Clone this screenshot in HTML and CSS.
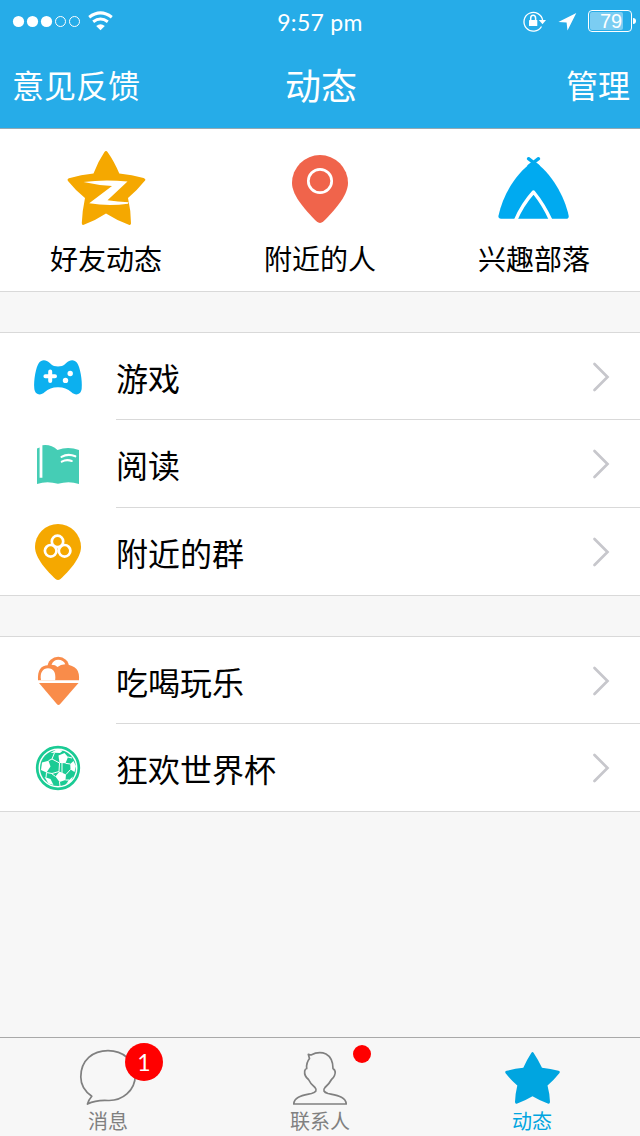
FILE: index.html
```
<!DOCTYPE html>
<html lang="zh-CN">
<head>
<meta charset="utf-8">
<title>动态</title>
<link rel="stylesheet" href="styles.css">
</head>
<body>
<div class="screen">
  <header class="header">
    <div class="status">
      <svg class="signal" viewBox="0 0 120 40">
        <g fill="#fff"><circle cx="18.5" cy="20.5" r="5.6"/><circle cx="32.5" cy="20.5" r="5.6"/><circle cx="46.5" cy="20.5" r="5.6"/></g>
        <g fill="none" stroke="#fff" stroke-width="1"><circle cx="60.5" cy="20.5" r="5"/><circle cx="74.5" cy="20.5" r="5"/></g>
        <g fill="none" stroke="#fff" stroke-width="3"><path d="M89.2 16.2Q100.5 7.6 111.8 16.2"/><path d="M93.2 20.8Q100.5 15.3 107.8 20.8"/></g>
        <path d="M96.2 25Q100.5 21.5 104.8 25L100.5 29.2Z" fill="#fff"/>
      </svg>
      <span class="time">9:57 pm</span>
      <div class="indicators">
        <svg class="lock-location" viewBox="510 0 66 40">
          <path d="M535.5 25.5A9.4 9.4 0 1 1 536.7 19.6" fill="none" stroke="#fff" stroke-width="1.3"/>
          <path d="M532.8 19H540L536.5 23.2Z" fill="#fff"/>
          <rect x="523" y="19" width="8.3" height="6" rx=".6" fill="#fff"/>
          <path d="M524.7 19V17.2A2.4 2.8 0 0 1 529.6 17.2V19" fill="none" stroke="#fff" stroke-width="1.5"/>
          <path d="M570.3 12L561.5 29.6L560.6 21.5L552.4 20.9Z" fill="#fff"/>
        </svg>
        <span class="battery"><span class="battery-level">79</span></span><span class="battery-cap"></span>
      </div>
    </div>
    <nav class="navbar">
      <span class="nav-side">意见反馈</span>
      <span class="nav-title">动态</span>
      <span class="nav-side nav-right">管理</span>
    </nav>
  </header>

  <section class="shortcuts">
    <div class="shortcut">
      <svg class="shortcut-icon" viewBox="61 143 90 90">
        <path d="M104.3 152.2Q106 149.8 107.7 152.2Q114 161 119.3 173.5Q132 174.6 143.6 178Q146.5 179.2 144.6 181Q137 190.5 128 198Q131 211 131 223.5Q130.8 225.5 128.8 224.8Q117 220.5 106 213.5Q95.5 220.5 83.8 224.8Q81.7 225.3 81.8 223Q82.3 210.5 85 198Q75.5 190.5 68 181Q66.8 179 69 178.2Q81 174.4 93.5 173.4Q98 161.5 104.3 152.2Z" fill="#f5a800"/>
        <path d="M83.5 182Q105 179 127.5 181.6L107.5 200.3Q118 202 128.5 202.3L128 203.8Q108 206.5 89.2 203.2L112 186Q98 185.3 83.5 182Z" fill="#fff"/>
      </svg>
      <span class="shortcut-label">好友动态</span>
    </div>
    <div class="shortcut">
      <svg class="shortcut-icon" viewBox="275 143 90 90">
        <path d="M292 183A28 28 0 1 1 348 183C348 196 333 212 323.3 221.5Q320 224.4 316.7 221.5C307 212 292 196 292 183Z" fill="#f0644b"/>
        <circle cx="320" cy="181" r="11.7" fill="none" stroke="#fff" stroke-width="2.7"/>
      </svg>
      <span class="shortcut-label">附近的人</span>
    </div>
    <div class="shortcut">
      <svg class="shortcut-icon" viewBox="489 143 90 90">
        <path d="M528.5 158.7L538 166M538.5 158.7L529 166" fill="none" stroke="#00aaf0" stroke-width="3.4" stroke-linecap="round"/>
        <path d="M533.5 161C551 172 565 197 568.7 216Q568.8 218.8 566 218.8H501Q498.2 218.8 498.4 216C503 195 515 174 533.5 161Z" fill="#00aaf0"/>
        <path d="M515.7 220Q522 205 533.5 192Q544 205 550.7 220" fill="none" stroke="#fff" stroke-width="3.4" stroke-linejoin="round"/>
      </svg>
      <span class="shortcut-label">兴趣部落</span>
    </div>
  </section>

  <section class="list">
    <div class="row">
      <svg class="row-icon" viewBox="28 346 60 60">
        <path d="M39 361.8C41.5 358 46.5 358.5 49.5 361.8Q52 364.5 54 365Q58 365.8 62 365Q64 364.5 66.5 361.8C69.5 358.5 74.5 358 77 361.8C80 366 82.5 379 81.7 387.5C81 394 75.5 395 71.5 391.3Q65.5 386 58 386.2Q50.5 386 44.5 391.3C40.5 395 35 394 34.3 387.5C33.5 379 36 366 39 361.8Z" fill="#0cb0ef"/>
        <path d="M50.2 370.5V380M45.4 375.2H55" stroke="#fff" stroke-width="4" stroke-linecap="round"/>
        <g fill="#fff"><circle cx="70.2" cy="372.5" r="2.7"/><circle cx="65.5" cy="379.4" r="2.7"/></g>
      </svg>
      <span class="row-label">游戏</span>
      <svg class="chevron" viewBox="0 0 20 32"><path d="M4.5 3L17.5 16L4.5 29"/></svg>
    </div>
    <div class="row">
      <svg class="row-icon" viewBox="28 434 60 60">
        <path d="M37 448.5L39.6 447.5V477.7H42.4V445.2Q51 444 57.5 450Q68 446.2 79 450V484Q69 480.5 58 483.8Q47 480.5 37 484Z" fill="#45cdb5"/>
        <path d="M61.5 456.8Q68 453.2 75.3 456.3M61.8 461.7Q66.5 459 71.7 461" fill="none" stroke="#fff" stroke-width="2.1" stroke-linecap="round"/>
      </svg>
      <span class="row-label">阅读</span>
      <svg class="chevron" viewBox="0 0 20 32"><path d="M4.5 3L17.5 16L4.5 29"/></svg>
    </div>
    <div class="row">
      <svg class="row-icon" viewBox="28 522 60 60">
        <path d="M35 547A23 23 0 1 1 81 547C81 558 69 571 60.5 579Q58 581 55.5 579C47 571 35 558 35 547Z" fill="#f5a800"/>
        <g fill="none" stroke="#fff" stroke-width="2.7"><circle cx="57.5" cy="541.4" r="5.7"/><circle cx="50.7" cy="550.8" r="5.8"/><circle cx="64.6" cy="550.8" r="5.8"/></g>
      </svg>
      <span class="row-label">附近的群</span>
      <svg class="chevron" viewBox="0 0 20 32"><path d="M4.5 3L17.5 16L4.5 29"/></svg>
    </div>
  </section>

  <section class="list">
    <div class="row">
      <svg class="row-icon" viewBox="28 650 60 60">
        <path d="M47.5 669V666A10.5 10 0 0 1 69 666V669L58 673Z" fill="#f98c4a"/>
        <path d="M38 679.3C37.5 669 41 664.5 48 664.3Q54 664.2 57 668C62 661.5 72 663 76.5 668Q79.5 671.5 79 679.3Z" fill="#f98c4a"/>
        <path d="M41 679.3C39.5 671.5 43 667.2 48 667.2C53.5 667.2 56 671 55.2 679.3Z" fill="#fff"/>
        <path d="M51.5 663.7Q53.5 658.7 58.2 658.7Q63.5 658.7 65.3 663.2Q60.5 663.3 57.5 666Q55.5 663.8 51.5 663.7Z" fill="#fff"/>
        <path d="M39 682H78.5L60.2 703Q58.5 704.8 56.8 703Z" fill="#f98c4a"/>
      </svg>
      <span class="row-label">吃喝玩乐</span>
      <svg class="chevron" viewBox="0 0 20 32"><path d="M4.5 3L17.5 16L4.5 29"/></svg>
    </div>
    <div class="row">
      <svg class="row-icon" viewBox="28 738 60 60">
        <circle cx="58" cy="768" r="20.8" fill="#fff" stroke="#1acb94" stroke-width="2.7"/>
        <circle cx="58" cy="768" r="18" fill="#1acb94"/>
        <g fill="#fff">
          <path d="M58.5 755.5L64.5 753L68 757L65.5 763.3L59.5 763Z"/>
          <path d="M42 762.5L48.5 760.7L50.5 766.5L46.5 772.5L41 770Z"/>
          <path d="M59.5 771.5L66 774.5L65.5 780L59.5 782L55.5 776.5Z"/>
          <path d="M73.5 761L76 766L74.5 772L70.5 769.5L70.2 764Z"/>
          <path d="M50.5 753L56.5 749.5L63 750.5L60 753L54.5 752.8Z"/>
          <path d="M44.5 777L50.5 779L53.5 785L48.5 783.5Z"/>
          <path d="M66 784.5L68.5 780.5L73 776.5L71 781.5Z"/>
        </g>
        <path d="M48.5 760.7L52 759L59.5 763L59 771.5L52 773.5L46.5 772.5L46 777.5M52 759L54.5 752.8M65.5 763.3L70.2 764M66 774.5L70.5 769.5M59.5 782L60 786M55.5 776.5L51.5 773.5M65.5 780L69 780M68 757L72 758M62 763L62 773" fill="none" stroke="#fff" stroke-width="1"/>
      </svg>
      <span class="row-label">狂欢世界杯</span>
      <svg class="chevron" viewBox="0 0 20 32"><path d="M4.5 3L17.5 16L4.5 29"/></svg>
    </div>
  </section>

  <footer class="tabbar">
    <div class="tab">
      <span class="tab-visual">
        <svg class="tab-icon" viewBox="72 1042 72 70">
          <path d="M87.5 1104Q88.5 1100 91.8 1096.3C83.5 1090.5 80.8 1083 80.8 1077C80.8 1060 93 1050.7 108 1050.7C123 1050.7 135.3 1061 135.3 1075C135.3 1091 122 1101 108 1100.5Q96 1099.8 87.5 1104Z" fill="none" stroke="#808080" stroke-width="1.7" stroke-linejoin="round"/>
        </svg>
        <span class="badge">1</span>
      </span>
      <span class="tab-label">消息</span>
    </div>
    <div class="tab">
      <span class="tab-visual">
        <svg class="tab-icon" viewBox="284 1042 72 70">
          <path d="M308.3 1054.3L311 1055Q319 1051 326 1054C331.5 1057 333 1062 333 1068.5Q336.5 1071 334.5 1075.5Q333.5 1078 331.5 1079.5Q329.5 1083.5 325 1087.5Q321.5 1091.5 328 1093.5C337 1095.5 346 1096.5 346.2 1104H293.8C294 1096.5 303 1095.5 311.5 1093.5Q318.5 1091.5 315 1087.5Q310.5 1084 308.5 1079.5Q304 1076 304.7 1071Q305.2 1068.8 306.7 1068.5Q306 1063 309.5 1058.5Z" fill="none" stroke="#808080" stroke-width="1.7" stroke-linejoin="round"/>
        </svg>
        <span class="dot"></span>
      </span>
      <span class="tab-label">联系人</span>
    </div>
    <div class="tab tab-active">
      <span class="tab-visual">
        <svg class="tab-icon" viewBox="496 1042 72 70">
          <path d="M531.3 1053Q532.5 1050.8 533.7 1053Q538 1059.5 542 1067.8Q550.5 1068.8 558.5 1070.8Q560.7 1071.6 559.3 1073.3Q554 1080 547.5 1085.5Q549.8 1094 550 1102Q549.8 1104.2 547.8 1103.5Q540 1100.8 532.5 1096.3Q525 1100.8 517.3 1103.5Q515 1104.2 515 1102Q515.2 1094 517.3 1085.5Q511 1080 505.6 1073.3Q504.4 1071.4 506.6 1070.8Q514.5 1068.6 523.3 1067.8Q527 1059.5 531.3 1053Z" fill="#00a5e0"/>
        </svg>
      </span>
      <span class="tab-label">动态</span>
    </div>
  </footer>
</div>
</body>
</html>
```
FILE: styles.css
```
* { box-sizing: border-box; }

body {
  margin: 0;
  font-family: "Noto Sans CJK SC", sans-serif;
  color: #000;
}

svg { display: block; flex: none; }

.screen {
  display: flex;
  flex-direction: column;
  width: 640px;
  height: 1136px;
  overflow: hidden;
  background: #f7f7f7;
}

.header {
  height: 129px;
  color: #fff;
  background: #26ace8;
  border-bottom: 1px solid #94a9b3;
}

.status {
  display: grid;
  grid-template-columns: 1fr auto 1fr;
  align-items: center;
  height: 40px;
}

.signal { width: 120px; height: 40px; }

.time {
  font: 23px/40px Lato, sans-serif;
  letter-spacing: 0.3px;
  padding-top: 2px;
}

.indicators {
  display: flex;
  align-items: center;
  justify-content: flex-end;
  padding-right: 10px;
}

.lock-location { width: 66px; height: 40px; margin-right: 6px; }

.battery {
  width: 44px;
  height: 22px;
  padding: 1px;
  border: 1px solid #fff;
  border-radius: 4px;
}

.battery-level {
  display: block;
  width: 33px;
  height: 18px;
  padding-left: 10px;
  border-radius: 2px;
  background: #7bcdf2;
  font: 20px/19px "Liberation Sans", sans-serif;
}

.battery-cap {
  width: 3px;
  height: 6px;
  margin: 0 -9px 0 1px;
  border-radius: 0 3px 3px 0;
  background: #fff;
}

.indicators .battery-cap { margin-right: -6px; }

.navbar {
  display: grid;
  grid-template-columns: 1fr auto 1fr;
  align-items: center;
  height: 88px;
  padding: 0 10px 0 12px;
}

.nav-side { font-size: 32px; line-height: 88px; }
.nav-right { text-align: right; }
.nav-title { font-size: 36px; line-height: 88px; }

.shortcuts {
  display: flex;
  justify-content: space-between;
  height: 163px;
  padding: 14px 50px 0;
  background: #fff;
  border-bottom: 1px solid #d9d9d9;
}

.shortcut {
  display: flex;
  flex-direction: column;
  align-items: center;
}

.shortcut-icon { width: 90px; height: 90px; }

.shortcut-label {
  font-size: 28px;
  line-height: 40px;
  margin-top: 5px;
}

.list {
  margin-top: 40px;
  background: #fff;
  border-top: 1px solid #d9d9d9;
  border-bottom: 1px solid #d9d9d9;
}

.row {
  position: relative;
  display: flex;
  align-items: center;
  height: 88px;
  padding: 0 28px;
}

.row:first-child { height: 87px; }
.row:last-child { height: 87px; }

.row + .row::before {
  content: "";
  position: absolute;
  top: -1px;
  left: 116px;
  right: 0;
  height: 1px;
  background: #d9d9d9;
}

.row-icon { width: 60px; height: 60px; }

.row-label {
  flex: 1;
  margin-left: 28px;
  font-size: 32px;
  line-height: 60px;
}

.chevron {
  width: 20px;
  height: 32px;
  margin-right: 2px;
  fill: none;
  stroke: #c7c7cc;
  stroke-width: 2.7;
  stroke-linecap: round;
}

.tabbar {
  display: flex;
  height: 99px;
  margin-top: auto;
  padding: 4px 2px 0;
  border-top: 1px solid #a9a9a9;
}

.tab {
  display: flex;
  flex: 1;
  flex-direction: column;
  align-items: center;
  color: #808080;
}

.tab-visual { position: relative; }
.tab-icon { width: 72px; height: 70px; }
.tab-label { font-size: 20px; line-height: 24px; margin-top: -3px; }
.tab-active { color: #00a5e0; }

.badge {
  position: absolute;
  top: 1px;
  left: 53px;
  width: 38px;
  height: 38px;
  border-radius: 50%;
  background: #f00;
  color: #fff;
  font: 23px/38px Lato, sans-serif;
  text-align: center;
}

.dot {
  position: absolute;
  top: 3px;
  left: 69px;
  width: 18px;
  height: 18px;
  border-radius: 50%;
  background: #f00;
}
```
